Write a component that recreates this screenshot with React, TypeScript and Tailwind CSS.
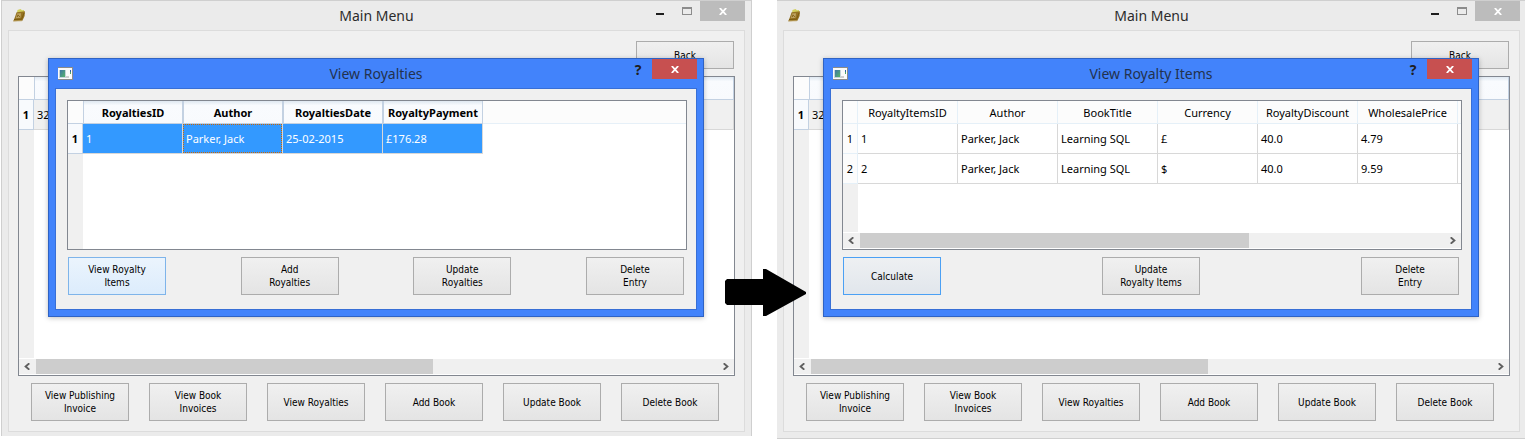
import type { ReactNode } from 'react';
import clsx from 'clsx';

const UI_FONT = "font-['Noto_Sans','Open_Sans',sans-serif]";
const BUTTON_FONT = "font-['DejaVu_Sans_Condensed','DejaVu_Sans',sans-serif]";

function BookIcon() {
  return (
    <svg className="h-[13px] w-[13px]" viewBox="0 0 13 13" aria-hidden="true">
      <path d="M4.5 1 L7.5 0 L9 1.2 L11 1 L11 3 L4 3.5 Z" fill="#d2d05c" />
      <path d="M3.6 3.2 L12 2.2 L11.6 7 L9.4 11.8 L0.2 12.2 L1.6 9 Z" fill="#957322" />
      <path d="M4.2 4.6 L8 4.2 L7.4 8.8 L2.8 9.2 Z" fill="#c0a566" />
      <path d="M4.2 8.2 L5 5.8 L6.8 8" stroke="#86651a" fill="none" />
      <path d="M1 10.5 L8.6 10.2 L11 4" stroke="#7c5b10" fill="none" />
      <path d="M0.4 12 L8.8 11.8" stroke="#c4ab70" strokeWidth="0.8" fill="none" />
    </svg>
  );
}

function AppIcon() {
  return (
    <svg className="h-[13px] w-[15px]" viewBox="0 0 15 13" aria-hidden="true">
      <defs>
        <linearGradient id="pane" x1="0" y1="0" x2="1" y2="1">
          <stop offset="0" stopColor="#3f74a8" />
          <stop offset="1" stopColor="#56b469" />
        </linearGradient>
      </defs>
      <rect x="0" y="0" width="15" height="13" fill="#8b8b8b" />
      <rect x="0" y="1" width="14" height="11" fill="#fbfbfb" />
      <rect x="1" y="3" width="7" height="8" fill="#c5d4da" />
      <rect x="2" y="3" width="5" height="7" fill="url(#pane)" />
      <rect x="8" y="9" width="3" height="2" fill="#cfcfcf" />
      <rect x="12" y="3" width="1" height="2" fill="#2f62a8" />
      <rect x="12" y="5" width="1" height="2" fill="#4ea765" />
    </svg>
  );
}

function Cross() {
  return (
    <svg className="h-[7px] w-[8px]" viewBox="0 0 8 7" aria-hidden="true">
      <path d="M0.8 0 L7.2 7 M7.2 0 L0.8 7" stroke="#fff" strokeWidth="1.8" fill="none" />
    </svg>
  );
}

function PushButton({ lines, tone = 'plain', short = false }: { lines: string[]; tone?: 'plain' | 'hover' | 'focus'; short?: boolean }) {
  return (
    <button
      type="button"
      className={clsx(
        'w-[98px] shrink-0 border bg-linear-to-b text-center text-[10px] leading-[13px] text-black',
        BUTTON_FONT,
        short ? 'h-7' : 'h-[38px]',
        tone === 'plain' && 'border-[#acacac] from-[#f0f0f0] to-[#e4e4e4]',
        tone === 'hover' && 'border-[#7eb4ea] from-[#ebf4fd] to-[#dcecfc]',
        tone === 'focus' && 'border-[#4ba0f4] from-[#eef0f2] to-[#e1e6ec]',
      )}
    >
      {lines.map((line) => (
        <span key={line} className="block whitespace-nowrap">{line}</span>
      ))}
    </button>
  );
}

function ScrollBar({ thumb }: { thumb: string }) {
  return (
    <div className="flex h-[17px] shrink-0 items-stretch border-y border-y-white bg-[#f0f0f0]">
      <button type="button" aria-label="Scroll left" className="flex w-[17px] items-center justify-center pr-px">
        <svg className="h-[7px] w-[6px]" viewBox="0 0 6 7" aria-hidden="true">
          <path d="M5.3 0.3 L1.6 3.5 L5.3 6.7" stroke="#5f5f5f" strokeWidth="1.9" fill="none" />
        </svg>
      </button>
      <div className="flex-1">
        <div className={clsx('h-full bg-[#cdcdcd]', thumb)} />
      </div>
      <button type="button" aria-label="Scroll right" className="flex w-[17px] items-center justify-center pl-px">
        <svg className="h-[7px] w-[6px]" viewBox="0 0 6 7" aria-hidden="true">
          <path d="M0.7 0.3 L4.4 3.5 L0.7 6.7" stroke="#5f5f5f" strokeWidth="1.9" fill="none" />
        </svg>
      </button>
    </div>
  );
}

function Dialog({ title, table, buttons }: { title: string; table: ReactNode; buttons: ReactNode }) {
  return (
    <section
      aria-label={title}
      className="absolute top-[27px] right-10 left-[39px] border border-[#2f63c4] bg-[#4283fb] px-[6px] pb-[6px] shadow-[0_1px_5px_rgba(0,0,0,0.25)]"
    >
      <header className="grid h-[29px] grid-cols-[1fr_auto_1fr] items-center">
        <div className="pl-[3px]"><AppIcon /></div>
        <h2 className="text-[14px] leading-5 text-[#22324e]">{title}</h2>
        <div className="flex items-start justify-end self-start">
          <button type="button" aria-label="Help" className="flex h-5 w-7 items-center justify-center text-[14px] font-bold text-[#1e1e1e]">?</button>
          <button type="button" aria-label="Close" className="flex h-5 w-[45px] items-center justify-center bg-[#c75050]"><Cross /></button>
        </div>
      </header>
      <div className="border border-[#386fd6] bg-[#f0f0f0] pt-[11px] pr-[9px] pb-[14px] pl-[11px]">
        <div className="flex h-[150px] flex-col border border-[#828790] bg-white">{table}</div>
        <div className="mt-[7px] flex justify-between pr-[3px] pl-px">{buttons}</div>
      </div>
    </section>
  );
}

function Gutter() {
  return <div className="w-[15px] flex-1 bg-[#f0f0f0]" />;
}

function RoyaltiesTable() {
  const heads = ['RoyaltiesID', 'Author', 'RoyaltiesDate', 'RoyaltyPayment'];
  const cells = ['1', 'Parker, Jack', '25-02-2015', '£176.28'];
  return (
    <>
      <table className="w-full table-fixed border-separate border-spacing-0 text-[11px] leading-4">
        <colgroup>
          <col className="w-[15px]" />
          {heads.map((h) => <col key={h} className="w-[100px]" />)}
          <col />
        </colgroup>
        <thead>
          <tr className="h-[23px] bg-[#fcfcfc]">
            <td className="border-b border-[#c3d1e2] p-0" />
            {heads.map((h) => (
              <th key={h} scope="col" className="border-x border-b border-[#c3d1e2] bg-linear-to-b from-[#dfe8f1] via-[#f9fbfe] via-20% to-[#f8fafd] p-0 pt-[2px] text-center font-bold">
                {h}
              </th>
            ))}
            <td className="border-b border-[#e6f0f8] p-0" />
          </tr>
        </thead>
        <tbody>
          <tr className="h-[30px]">
            <th scope="row" className="border-r border-b border-[#c3d1e2] bg-[#f8fafd] p-0 text-center font-bold">1</th>
            {cells.map((c, i) => (
              <td key={c} className="border-r border-b border-[#d8d8d8] bg-[#3399ff] p-0 text-white">
                <div className={clsx('flex h-[29px] items-center border pl-[2px]', i === 1 ? 'border-dotted border-[#cc6600]' : 'border-transparent')}>{c}</div>
              </td>
            ))}
            <td />
          </tr>
        </tbody>
      </table>
      <Gutter />
    </>
  );
}

function ItemsTable() {
  const heads = ['RoyaltyItemsID', 'Author', 'BookTitle', 'Currency', 'RoyaltyDiscount', 'WholesalePrice'];
  const rows = [
    ['1', 'Parker, Jack', 'Learning SQL', '£', '40.0', '4.79'],
    ['2', 'Parker, Jack', 'Learning SQL', '$', '40.0', '9.59'],
  ];
  return (
    <>
      <table className="w-full table-fixed border-separate border-spacing-0 text-[11px] leading-4">
        <colgroup>
          <col className="w-[15px]" />
          {heads.map((h) => <col key={h} className="w-[100px]" />)}
          <col />
        </colgroup>
        <thead>
          <tr className="h-[23px] bg-[#fcfcfc]">
            <td className="border-r border-b border-[#e5f0f8] p-0" />
            {heads.map((h) => (
              <th key={h} scope="col" className="border-r border-b border-[#e5f0f8] p-0 pt-[2px] text-center font-normal">{h}</th>
            ))}
            <td className="border-b border-[#e5f0f8] p-0" />
          </tr>
        </thead>
        <tbody>
          {rows.map((row) => (
            <tr key={row[0]} className="h-[30px]">
              <th scope="row" className="border-r border-b border-[#e5f0f8] bg-[#fcfcfc] p-0 text-center font-normal">{row[0]}</th>
              {row.map((c, i) => (
                <td key={i} className="border-r border-b border-[#d8d8d8] p-0 pl-[3px]">{c}</td>
              ))}
              <td className="border-b border-[#d8d8d8] p-0" />
            </tr>
          ))}
        </tbody>
      </table>
      <Gutter />
      <ScrollBar thumb="w-[389px]" />
    </>
  );
}

function MainWindow({ className, children }: { className: string; children: ReactNode }) {
  return (
    <main className={clsx('border-[#cfcfcf] bg-[#ebebeb]', className)}>
      <header className="grid h-[29px] grid-cols-[1fr_auto_1fr] items-center">
        <div className="pl-[5px]"><BookIcon /></div>
        <h1 className="text-[14px] leading-5 text-[#2b2b2b]">Main Menu</h1>
        <div className="flex justify-end self-start">
          <button type="button" aria-label="Minimise" className="flex h-5 w-[26px] items-center justify-center pt-[5px]">
            <span className="h-[2px] w-2 bg-[#1e1e1e]" />
          </button>
          <button type="button" aria-label="Maximise" className="flex h-5 w-[27px] items-center justify-center">
            <span className="h-2 w-[10px] border border-t-2 border-[#8c8c8c]" />
          </button>
          <button type="button" aria-label="Close" className="flex h-5 w-[45px] items-center justify-center bg-[#bcbcbc]"><Cross /></button>
        </div>
      </header>
      <div className="relative border border-[#dcdcdc] bg-[#f0f0f0] px-[9px] py-[10px]">
        <div className="flex justify-end pr-px"><PushButton lines={['Back']} short /></div>
        <div className="mt-[7px] flex h-[300px] flex-col border border-[#828790] bg-white">
          <table className="w-full table-fixed border-separate border-spacing-0 text-[11px] leading-4">
            <colgroup>
              <col className="w-[15px]" />
              <col />
            </colgroup>
            <thead>
              <tr className="h-[23px]">
                <td className="border-b border-[#c3d1e2] bg-[#fcfcfc] p-0" />
                <td className="border-r border-b border-l border-[#c3d1e2] bg-linear-to-b from-[#e0e9f2] via-[#f9fbfe] via-20% to-[#f8fafd] p-0" />
              </tr>
            </thead>
            <tbody>
              <tr className="h-[30px]">
                <th scope="row" className="border-r border-b border-[#c3d1e2] bg-[#f8fafd] p-0 text-center font-bold">1</th>
                <td className="border-r border-b border-[#d8d8d8] bg-[#f0f0f0] p-0 pl-[3px]">32</td>
              </tr>
            </tbody>
          </table>
          <Gutter />
          <ScrollBar thumb="w-[397px]" />
        </div>
        <div className="mt-[7px] flex justify-between pr-4 pl-[13px]">
          <PushButton lines={['View Publishing', 'Invoice']} />
          <PushButton lines={['View Book', 'Invoices']} />
          <PushButton lines={['View Royalties']} />
          <PushButton lines={['Add Book']} />
          <PushButton lines={['Update Book']} />
          <PushButton lines={['Delete Book']} />
        </div>
        {children}
      </div>
    </main>
  );
}

export default function App() {
  return (
    <div className={clsx('grid grid-cols-[751fr_25px_748fr] items-start bg-white px-px text-black', UI_FONT)}>
      <MainWindow className="border-x border-t px-[6px] pb-1">
        <Dialog
          title="View Royalties"
          table={<RoyaltiesTable />}
          buttons={
            <>
              <PushButton lines={['View Royalty', 'Items']} tone="hover" />
              <PushButton lines={['Add', 'Royalties']} />
              <PushButton lines={['Update', 'Royalties']} />
              <PushButton lines={['Delete', 'Entry']} />
            </>
          }
        />
      </MainWindow>
      <div className="relative z-10 self-stretch">
        <svg className="absolute top-[269px] left-[-27px] h-[47px] w-[81px]" viewBox="0 0 81 47" role="img" aria-label="leads to">
          <path d="M2 10 H38 V0 H41 L81 23 V25 L41 47 H38 V36 H2 L0 34 V12 Z" fill="#000" />
        </svg>
      </div>
      <MainWindow className="border-y pr-[5px] pb-[6px] pl-[6px]">
        <Dialog
          title="View Royalty Items"
          table={<ItemsTable />}
          buttons={
            <>
              <PushButton lines={['Calculate']} tone="focus" />
              <PushButton lines={['Update', 'Royalty Items']} />
              <PushButton lines={['Delete', 'Entry']} />
            </>
          }
        />
      </MainWindow>
    </div>
  );
}
